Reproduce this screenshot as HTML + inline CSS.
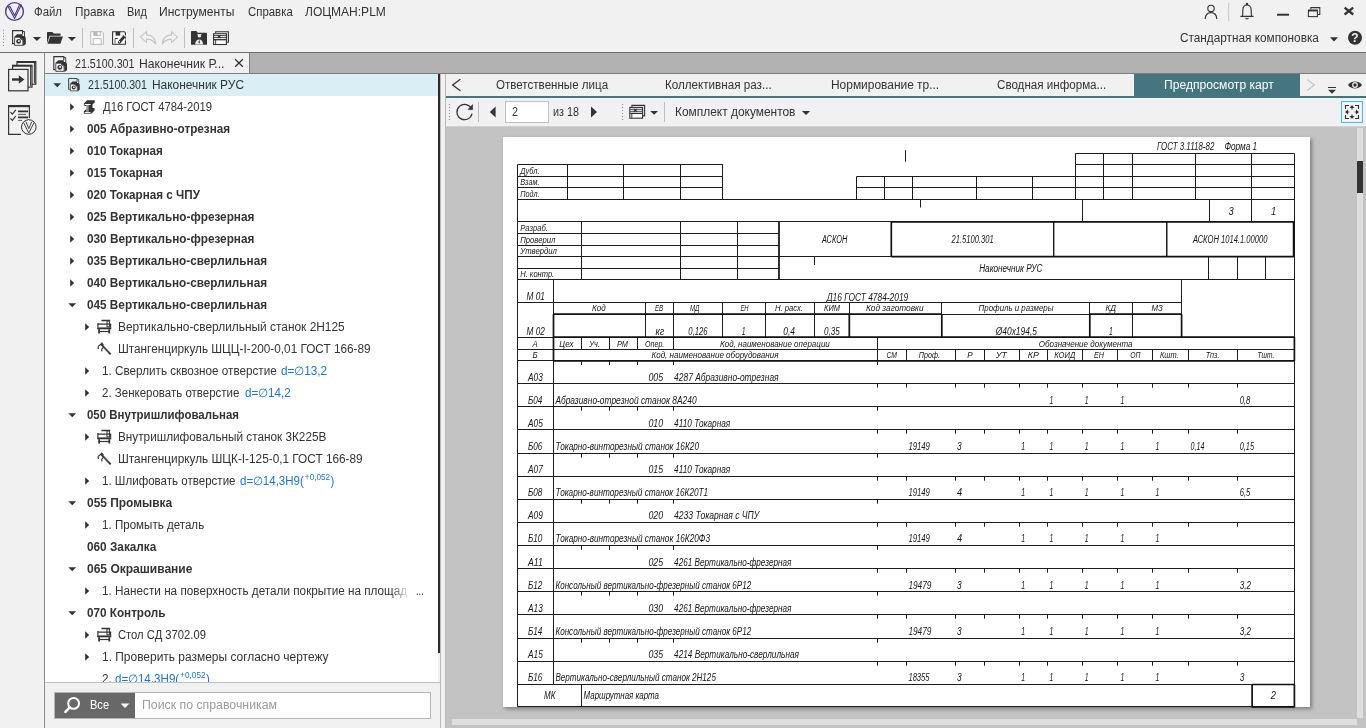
<!DOCTYPE html>
<html lang="ru"><head><meta charset="utf-8"><title>ЛОЦМАН:PLM</title>
<style>
html,body{margin:0;padding:0}
body{width:1366px;height:728px;position:relative;overflow:hidden;background:#f1f1f1;font-family:"Liberation Sans",sans-serif;font-size:12px;color:#333}
.t{position:absolute;white-space:nowrap;line-height:20px;height:20px;transform-origin:0 50%;display:block}
.b{position:absolute}
svg{position:absolute;overflow:visible}
#app{position:absolute;left:0;top:0;width:1366px;height:728px;will-change:transform}
</style></head>
<body>
<div id="app">
<svg style="left:4px;top:1px" width="22" height="22" viewBox="0 0 22 22"><circle cx="10.5" cy="10.5" r="8.9" fill="none" stroke="#523a90" stroke-width="1.4"/><path d="M4.2 5.7 L10.6 17.5 L17.3 3.9 L15.7 3.4 L10.6 14.6 L6 5.4 Z" fill="none" stroke="#523a90" stroke-width="1.1" stroke-linejoin="round"/></svg>
<span class="t" style="left:34.30px;top:1.5px;font-size:12px;transform:scaleX(0.9492);">Файл</span>
<span class="t" style="left:74.70px;top:1.5px;font-size:12px;transform:scaleX(0.9797);">Правка</span>
<span class="t" style="left:127.30px;top:1.5px;font-size:12px;transform:scaleX(0.9103);">Вид</span>
<span class="t" style="left:159.30px;top:1.5px;font-size:12px;transform:scaleX(1.0070);">Инструменты</span>
<span class="t" style="left:247.50px;top:1.5px;font-size:12px;transform:scaleX(0.9507);">Справка</span>
<span class="t" style="left:304.70px;top:1.5px;font-size:12px;transform:scaleX(1.0006);">ЛОЦМАН:PLM</span>
<svg style="left:1200px;top:0" width="166" height="24" viewBox="0 0 166 24"><g fill="none" stroke="#333" stroke-width="1.15"><circle cx="11" cy="8.4" r="3.2"/><path d="M5.2 19 C5.4 14.6 8 12.6 11 12.6 C14 12.6 16.6 14.6 16.8 19"/><path d="M40.4 16.4 H53.6 M42.2 16.4 C43.2 15 42.6 12.6 42.8 10 C43 6.6 44.8 5 47 5 C49.2 5 51 6.6 51.2 10 C51.4 12.6 50.8 15 51.8 16.4"/><path d="M45.6 17.9 A1.5 1.5 0 0 0 48.4 17.9"/><circle cx="47" cy="4" r="0.7" fill="#333"/></g><path d="M28.7 3 V21" stroke="#c8c8c8" stroke-width="1"/><path d="M77 14.7 H89" stroke="#333" stroke-width="2"/><g fill="none" stroke="#333" stroke-width="1.05"><rect x="108.4" y="10.2" width="9" height="6.4"/><path d="M108 10.6 H117.8" stroke-width="1.7"/><path d="M110.8 9.6 V7.6 H119.8 V14.4 H117.6"/></g><path d="M144.6 7.6 L153.2 14.5 M153.2 7.6 L144.6 14.5" stroke="#333" stroke-width="2.3"/></svg>
<span class="t" style="left:1179.50px;top:27.5px;font-size:12px;transform:scaleX(0.9823);">Стандартная компоновка</span>
<svg style="left:1328px;top:28px" width="38" height="20" viewBox="0 0 38 20"><path d="M2 9.2 H10 L6 13.4 Z" fill="#333"/><circle cx="27" cy="9.7" r="7" fill="#333"/><text x="27" y="14" font-size="12" font-weight="bold" fill="#f1f1f1" text-anchor="middle" font-family="Liberation Sans,sans-serif">?</text></svg>
<svg style="left:0;top:26px" width="240" height="24" viewBox="0 26 240 24"><path d="M3.5 29.8 V46" stroke="#8a8a8a" stroke-width="1" stroke-dasharray="1 2"/><g transform="translate(11.8 30)"><path d="M2.2 13.6 H0.8 V0.6 H10.8 V4" fill="none" stroke="#333" stroke-width="1.1"/><path d="M11 1.5 H12.7 V6" fill="none" stroke="#333" stroke-width="0.9"/><path d="M2.4 7 L5.3 4.3 H10.8 V6.1 H13.1 L14 8.2 V13.9 L11.9 15.7 H11.3 V10.3 L7.4 7 Z" fill="#333"/><path d="M2.8 7.3 H7.2 L11.1 10.6 V15.3 H2.8 Z" fill="#fcfcfc" stroke="#333" stroke-width="0.9"/><circle cx="6.8" cy="11.4" r="2.4" fill="#333"/><circle cx="7.1" cy="11" r="1.05" fill="#f4f4f4"/></g><path d="M32.8 37 H41 L36.9 41 Z" fill="#333"/><path d="M47 43.6 V32.4 Q47 31.9 47.6 31.9 H52.3 L53.8 33.6 H60 Q60.6 33.6 60.6 34.2 V35.8 H49.6 L47 43.6 Z" fill="#333"/><path d="M47.6 43.8 L50.2 36.6 H63 L60.4 43.8 Z" fill="#333"/><path d="M67.8 37 H76 L71.9 41 Z" fill="#333"/><path d="M82.5 28 V48 M133.5 28 V48 M184.5 28 V48" stroke="#bdbdbd"/><g fill="#fbfbfb" stroke="#bcbcbc"><path d="M90.7 31.7 H102.4 L103.4 32.7 V44.3 H90.7 Z"/><rect x="93.8" y="31.7" width="6.6" height="3.8" fill="#fbfbfb"/><rect x="94" y="31.9" width="3.6" height="3.4" fill="#b9b9b9" stroke="none"/><rect x="93.2" y="38.6" width="8" height="5.7"/></g><g><path d="M112.6 31.7 H124.4 L125.4 32.7 V44.2 H112.6 Z" fill="#fcfcfc" stroke="#333" stroke-width="1.1"/><rect x="115.6" y="31.7" width="4.6" height="3.9" fill="#333"/><rect x="114.3" y="38.4" width="1.4" height="5.3" fill="#9c9c9c"/><path d="M115 38.5 H117.8" stroke="#333" stroke-width="0.9"/><path d="M124.4 35.2 V40.6" stroke="#fcfcfc" stroke-width="2.4"/><path d="M119.3 42.2 L123.3 37.6" stroke="#333" stroke-width="2.9" stroke-linecap="round"/><path d="M122.8 35.6 L125.6 38.2" stroke="#333" stroke-width="1.3"/><circle cx="119.4" cy="41.8" r="0.7" fill="#fff"/></g><g fill="none" stroke="#c4c4c4" stroke-width="1.1" stroke-linejoin="round"><path d="M146.5 31.6 L140.4 37.2 L146.5 42.4 V39.4 C150.5 39 153.5 40.6 155.6 44 C155.4 38.5 152 35.2 146.5 34.9 Z"/><path d="M171.5 31.6 L177.6 37.2 L171.5 42.4 V39.4 C167.5 39 164.5 40.6 162.4 44 C162.6 38.5 166 35.2 171.5 34.9 Z"/></g><path d="M191 44.8 V31.6 Q191 31 191.6 31 H196.4 L197.8 32.8 H206.4 Q207 32.8 207 33.4 V44.8 Z" fill="#333"/><circle cx="199.4" cy="35.9" r="1.7" fill="#ececec"/><path d="M197.4 34.6 H201.4" stroke="#ececec" stroke-width="1"/><path d="M195.2 44.4 C195.2 41.2 197 39.4 199.2 39.4 C201.4 39.4 203 41.2 203 44.4 Z" fill="#ececec"/><path d="M199.2 39.6 L198.4 42.4 L199.2 43.6 L200 42.4 Z" fill="#333"/><g transform="translate(213 31)"><path d="M2.7 2.2 V0.7 H15.4 V11.2 H13.9" fill="none" stroke="#333" stroke-width="1.1"/><rect x="0.6" y="2.7" width="12.8" height="10.8" fill="#fcfcfc" stroke="#333" stroke-width="1.1"/><path d="M1 4.6 H13 M1 6.6 H13" stroke="#333" stroke-width="0.9"/><path d="M1 8.7 H13" stroke="#333" stroke-width="1.3"/><path d="M4.6 4.2 L7.6 7 M7.6 4.2 L4.6 7" stroke="#333" stroke-width="1.2"/><path d="M2.6 9 V13.2" stroke="#333" stroke-width="0.9"/></g></svg>
<div class="b" style="left:0px;top:52px;width:1366px;height:1px;background:#6e6e6e;"></div>
<div class="b" style="left:45px;top:53px;width:1321px;height:20px;background:#b2b2b2;"></div>
<div class="b" style="left:45px;top:73px;width:1321px;height:1px;background:#7c7c7c;"></div>
<div class="b" style="left:44px;top:53px;width:1px;height:675px;background:#8c8c8c;"></div>
<svg style="left:0;top:56px" width="44" height="90" viewBox="0 56 44 90"><g fill="#f1f1f1" stroke="#333" stroke-width="1.2"><rect x="17" y="61.6" width="18.8" height="22.6"/><rect x="12.6" y="65.3" width="19.4" height="21.8"/><rect x="8.6" y="69.4" width="19.4" height="21.4"/></g><path d="M34.4 63 V83 M30.6 66.6 V86" stroke="#333" stroke-width="1"/><path d="M12 79.5 H20" stroke="#333" stroke-width="2.4"/><path d="M18.8 75.2 L24.4 79.5 L18.8 83.8 Z" fill="#333"/><path d="M17 62.2 H35.8 M12.6 65.9 H32" stroke="#333" stroke-width="1.8"/><g fill="none" stroke="#333" stroke-width="1.2"><path d="M21 134.3 H8.6 V105.6 H29.4 V118"/><path d="M8 106.2 H30" stroke-width="2"/><path d="M10.4 112.2 L12.4 114.2 L15.8 109.8 M10.4 118.4 L12.4 120.4 L15.8 116"/><path d="M18 111.4 H28 M18 117.4 H28" stroke-width="1.6"/><path d="M18 114.4 H26 M18 120.4 H22" stroke-width="0.8"/><circle cx="28.8" cy="127" r="7.3" fill="#f1f1f1" stroke-width="1"/><path d="M23.6 122.6 L28.8 133.2 L34 122.6 M25.8 121.6 L28.8 128.6 L31.8 121.6" stroke-width="0.9"/></g></svg>
<div class="b" style="left:45px;top:53px;width:204px;height:20px;background:#f1f1f1;"></div>
<div class="b" style="left:249px;top:53px;width:1px;height:20px;background:#7a7a7a;"></div>
<svg style="left:53px;top:55.5px" width="14.5" height="16.0" viewBox="0 0 14.5 16"><path d="M2.2 13.6 H0.8 V0.6 H10.8 V4" fill="none" stroke="#333" stroke-width="1.1"/><path d="M11 1.5 H12.7 V6" fill="none" stroke="#333" stroke-width="0.9"/><path d="M2.4 7 L5.3 4.3 H10.8 V6.1 H13.1 L14 8.2 V13.9 L11.9 15.7 H11.3 V10.3 L7.4 7 Z" fill="#333"/><path d="M2.8 7.3 H7.2 L11.1 10.6 V15.3 H2.8 Z" fill="#fcfcfc" stroke="#333" stroke-width="0.9"/><circle cx="6.8" cy="11.4" r="2.4" fill="#333"/><circle cx="7.1" cy="11" r="1.05" fill="#f4f4f4"/></svg>
<span class="t" style="left:75.20px;top:53.5px;font-size:12px;transform:scaleX(0.8914);">21.5100.301</span>
<span class="t" style="left:138.80px;top:53.5px;font-size:12px;transform:scaleX(1.0148);">Наконечник Р...</span>
<svg style="left:232px;top:56px" width="14" height="14" viewBox="0 0 14 14"><path d="M3.2 3.2 L10.8 10.8 M10.8 3.2 L3.2 10.8" stroke="#333" stroke-width="1.3"/></svg>
<div class="b" style="left:45px;top:74px;width:393px;height:608px;background:#fff;overflow:hidden">
<div class="b" style="left:0;top:0;width:393px;height:22px;background:#d9eff5"></div>
</div>
<div id="tree" class="b" style="left:0;top:74px;width:438px;height:608px;overflow:hidden"><div class="b" style="left:0;top:-74px;width:438px;height:700px">
<svg style="left:53px;top:83.2px" width="9" height="5" viewBox="0 0 9 5"><path d="M0.3 0.3 H8.1 L4.2 4.3 Z" fill="#333"/></svg>
<svg style="left:68px;top:78px" width="12.18" height="13.44" viewBox="0 0 14.5 16"><path d="M2.2 13.6 H0.8 V0.6 H10.8 V4" fill="none" stroke="#333" stroke-width="1.1"/><path d="M11 1.5 H12.7 V6" fill="none" stroke="#333" stroke-width="0.9"/><path d="M2.4 7 L5.3 4.3 H10.8 V6.1 H13.1 L14 8.2 V13.9 L11.9 15.7 H11.3 V10.3 L7.4 7 Z" fill="#333"/><path d="M2.8 7.3 H7.2 L11.1 10.6 V15.3 H2.8 Z" fill="#fcfcfc" stroke="#333" stroke-width="0.9"/><circle cx="6.8" cy="11.4" r="2.4" fill="#333"/><circle cx="7.1" cy="11" r="1.05" fill="#f4f4f4"/></svg>
<span class="t" style="left:88.40px;top:74.5px;font-size:12px;transform:scaleX(0.8824);">21.5100.301</span>
<span class="t" style="left:151.50px;top:74.5px;font-size:12px;transform:scaleX(0.9946);">Наконечник РУС</span>
<svg style="left:70px;top:103.2px" width="5" height="8" viewBox="0 0 5 8"><path d="M0.2 0.3 L4.2 4 L0.2 7.7 Z" fill="#333"/></svg>
<svg style="left:83.3px;top:100px" width="13" height="15" viewBox="0 0 13 15"><path d="M4 0.2 H11.7 V2.4 L9.5 4.4 V7.7 L11.6 8.3 V10.5 L8.3 13.8 H0.9 V11.3 L3.5 8.8 V6 L0.9 5.8 V3.5 Z" fill="#333"/><rect x="1.7" y="4" width="5.9" height="1" fill="#fff"/><rect x="1.7" y="12.1" width="5.9" height="1" fill="#fff"/><rect x="3.5" y="5" width="1" height="6.9" fill="#e2e2e2"/><rect x="4.5" y="5" width="1.2" height="6.9" fill="#9a9a9a"/></svg>
<span class="t" style="left:103.00px;top:96.5px;font-size:12px;transform:scaleX(0.9385);">Д16 ГОСТ 4784-2019</span>
<svg style="left:70px;top:125.2px" width="5" height="8" viewBox="0 0 5 8"><path d="M0.2 0.3 L4.2 4 L0.2 7.7 Z" fill="#333"/></svg>
<span class="t" style="left:87.40px;top:118.5px;font-size:12px;transform:scaleX(0.9768);font-weight:bold;">005 Абразивно-отрезная</span>
<svg style="left:70px;top:147.2px" width="5" height="8" viewBox="0 0 5 8"><path d="M0.2 0.3 L4.2 4 L0.2 7.7 Z" fill="#333"/></svg>
<span class="t" style="left:87.40px;top:140.5px;font-size:12px;transform:scaleX(0.9687);font-weight:bold;">010 Токарная</span>
<svg style="left:70px;top:169.2px" width="5" height="8" viewBox="0 0 5 8"><path d="M0.2 0.3 L4.2 4 L0.2 7.7 Z" fill="#333"/></svg>
<span class="t" style="left:87.40px;top:162.5px;font-size:12px;transform:scaleX(0.9687);font-weight:bold;">015 Токарная</span>
<svg style="left:70px;top:191.2px" width="5" height="8" viewBox="0 0 5 8"><path d="M0.2 0.3 L4.2 4 L0.2 7.7 Z" fill="#333"/></svg>
<span class="t" style="left:87.40px;top:184.5px;font-size:12px;transform:scaleX(0.9729);font-weight:bold;">020 Токарная с ЧПУ</span>
<svg style="left:70px;top:213.2px" width="5" height="8" viewBox="0 0 5 8"><path d="M0.2 0.3 L4.2 4 L0.2 7.7 Z" fill="#333"/></svg>
<span class="t" style="left:87.40px;top:206.5px;font-size:12px;transform:scaleX(0.9811);font-weight:bold;">025 Вертикально-фрезерная</span>
<svg style="left:70px;top:235.2px" width="5" height="8" viewBox="0 0 5 8"><path d="M0.2 0.3 L4.2 4 L0.2 7.7 Z" fill="#333"/></svg>
<span class="t" style="left:87.40px;top:228.5px;font-size:12px;transform:scaleX(0.9811);font-weight:bold;">030 Вертикально-фрезерная</span>
<svg style="left:70px;top:257.2px" width="5" height="8" viewBox="0 0 5 8"><path d="M0.2 0.3 L4.2 4 L0.2 7.7 Z" fill="#333"/></svg>
<span class="t" style="left:87.40px;top:250.5px;font-size:12px;transform:scaleX(0.9789);font-weight:bold;">035 Вертикально-сверлильная</span>
<svg style="left:70px;top:279.2px" width="5" height="8" viewBox="0 0 5 8"><path d="M0.2 0.3 L4.2 4 L0.2 7.7 Z" fill="#333"/></svg>
<span class="t" style="left:87.40px;top:272.5px;font-size:12px;transform:scaleX(0.9789);font-weight:bold;">040 Вертикально-сверлильная</span>
<svg style="left:68px;top:303.2px" width="9" height="5" viewBox="0 0 9 5"><path d="M0.3 0.3 H8.1 L4.2 4.3 Z" fill="#333"/></svg>
<span class="t" style="left:87.40px;top:294.5px;font-size:12px;transform:scaleX(0.9789);font-weight:bold;">045 Вертикально-сверлильная</span>
<svg style="left:85.2px;top:323.2px" width="5" height="8" viewBox="0 0 5 8"><path d="M0.2 0.3 L4.2 4 L0.2 7.7 Z" fill="#333"/></svg>
<svg style="left:96.8px;top:319.2px" width="15" height="15" viewBox="0 0 15 15"><path d="M4.4 1.5 H13.2" stroke="#333" stroke-width="1.5"/><rect x="10" y="2" width="2.4" height="5.8" fill="#fff" stroke="#333" stroke-width="1"/><path d="M0.9 8.5 V4 M0.9 5.2 H13.6 V8.5" fill="none" stroke="#333" stroke-width="1.2"/><rect x="0.1" y="8.4" width="14.2" height="1.9" fill="#333"/><path d="M2.1 10.3 V14.5 M12.3 10.3 V14.5" stroke="#333" stroke-width="1.8" fill="none"/><path d="M2.1 12.5 H12.3" stroke="#333" stroke-width="1.2"/></svg>
<span class="t" style="left:118.10px;top:316.5px;font-size:12px;transform:scaleX(0.9910);">Вертикально-сверлильный станок 2Н125</span>
<svg style="left:96.6px;top:342.4px" width="15" height="14" viewBox="0 0 15 14"><path d="M3.6 1.6 L13.6 12.4" stroke="#333" stroke-width="1.9"/><path d="M4.4 0.6 L6.4 2.8 M1 4.6 L3.8 2.2 M1.4 7 L1 4.6 M4.6 7.4 L6.4 5.4 M5 9.4 L4.6 7.4" stroke="#333" stroke-width="1.2" fill="none"/><path d="M6.6 5 L11.8 10.6" stroke="#f4f4f4" stroke-width="0.5" stroke-dasharray="0.8 0.8"/></svg>
<span class="t" style="left:118.10px;top:338.5px;font-size:12px;transform:scaleX(0.9819);">Штангенциркуль ШЦЦ-I-200-0,01 ГОСТ 166-89</span>
<svg style="left:85.2px;top:367.2px" width="5" height="8" viewBox="0 0 5 8"><path d="M0.2 0.3 L4.2 4 L0.2 7.7 Z" fill="#333"/></svg>
<span class="t" style="left:102.20px;top:360.5px;font-size:12px;transform:scaleX(0.9753);">1. Сверлить сквозное отверстие</span>
<span class="t" style="left:280.70px;top:360.5px;font-size:12px;transform:scaleX(0.9804);color:#1a73d8;">d=∅13,2</span>
<svg style="left:85.2px;top:389.2px" width="5" height="8" viewBox="0 0 5 8"><path d="M0.2 0.3 L4.2 4 L0.2 7.7 Z" fill="#333"/></svg>
<span class="t" style="left:102.20px;top:382.5px;font-size:12px;transform:scaleX(0.9583);">2. Зенкеровать отверстие</span>
<span class="t" style="left:244.70px;top:382.5px;font-size:12px;transform:scaleX(0.9739);color:#1a73d8;">d=∅14,2</span>
<svg style="left:68px;top:413.2px" width="9" height="5" viewBox="0 0 9 5"><path d="M0.3 0.3 H8.1 L4.2 4.3 Z" fill="#333"/></svg>
<span class="t" style="left:87.40px;top:404.5px;font-size:12px;transform:scaleX(0.9546);font-weight:bold;">050 Внутришлифовальная</span>
<svg style="left:85.2px;top:433.2px" width="5" height="8" viewBox="0 0 5 8"><path d="M0.2 0.3 L4.2 4 L0.2 7.7 Z" fill="#333"/></svg>
<svg style="left:96.8px;top:429.2px" width="15" height="15" viewBox="0 0 15 15"><path d="M4.4 1.5 H13.2" stroke="#333" stroke-width="1.5"/><rect x="10" y="2" width="2.4" height="5.8" fill="#fff" stroke="#333" stroke-width="1"/><path d="M0.9 8.5 V4 M0.9 5.2 H13.6 V8.5" fill="none" stroke="#333" stroke-width="1.2"/><rect x="0.1" y="8.4" width="14.2" height="1.9" fill="#333"/><path d="M2.1 10.3 V14.5 M12.3 10.3 V14.5" stroke="#333" stroke-width="1.8" fill="none"/><path d="M2.1 12.5 H12.3" stroke="#333" stroke-width="1.2"/></svg>
<span class="t" style="left:118.10px;top:426.5px;font-size:12px;transform:scaleX(0.9807);">Внутришлифовальный станок 3К225В</span>
<svg style="left:96.6px;top:452.4px" width="15" height="14" viewBox="0 0 15 14"><path d="M3.6 1.6 L13.6 12.4" stroke="#333" stroke-width="1.9"/><path d="M4.4 0.6 L6.4 2.8 M1 4.6 L3.8 2.2 M1.4 7 L1 4.6 M4.6 7.4 L6.4 5.4 M5 9.4 L4.6 7.4" stroke="#333" stroke-width="1.2" fill="none"/><path d="M6.6 5 L11.8 10.6" stroke="#f4f4f4" stroke-width="0.5" stroke-dasharray="0.8 0.8"/></svg>
<span class="t" style="left:118.10px;top:448.5px;font-size:12px;transform:scaleX(0.9837);">Штангенциркуль ШЦК-I-125-0,1 ГОСТ 166-89</span>
<svg style="left:85.2px;top:477.2px" width="5" height="8" viewBox="0 0 5 8"><path d="M0.2 0.3 L4.2 4 L0.2 7.7 Z" fill="#333"/></svg>
<span class="t" style="left:102.20px;top:470.5px;font-size:12px;transform:scaleX(0.9629);">1. Шлифовать отверстие</span>
<span class="t" style="left:239.6px;top:470.5px;color:#1a73d8;transform:scaleX(0.9625)">d=∅14,3H9(<span style="font-size:8.5px;position:relative;top:-4.5px;margin:0 0.5px 0 1px">+0,052</span>)</span>
<svg style="left:68px;top:501.2px" width="9" height="5" viewBox="0 0 9 5"><path d="M0.3 0.3 H8.1 L4.2 4.3 Z" fill="#333"/></svg>
<span class="t" style="left:87.40px;top:492.5px;font-size:12px;transform:scaleX(0.9948);font-weight:bold;">055 Промывка</span>
<svg style="left:85.2px;top:521.2px" width="5" height="8" viewBox="0 0 5 8"><path d="M0.2 0.3 L4.2 4 L0.2 7.7 Z" fill="#333"/></svg>
<span class="t" style="left:102.20px;top:514.5px;font-size:12px;transform:scaleX(0.9653);">1. Промыть деталь</span>
<span class="t" style="left:87.40px;top:536.5px;font-size:12px;transform:scaleX(0.9827);font-weight:bold;">060 Закалка</span>
<svg style="left:68px;top:567.2px" width="9" height="5" viewBox="0 0 9 5"><path d="M0.3 0.3 H8.1 L4.2 4.3 Z" fill="#333"/></svg>
<span class="t" style="left:87.40px;top:558.5px;font-size:12px;transform:scaleX(1.0014);font-weight:bold;">065 Окрашивание</span>
<svg style="left:85.2px;top:587.2px" width="5" height="8" viewBox="0 0 5 8"><path d="M0.2 0.3 L4.2 4 L0.2 7.7 Z" fill="#333"/></svg>
<span class="t" style="left:102.20px;top:580.5px;font-size:12px;transform:scaleX(0.9783);">1. Нанести на поверхность детали покрытие на площад</span>
<svg style="left:68px;top:611.2px" width="9" height="5" viewBox="0 0 9 5"><path d="M0.3 0.3 H8.1 L4.2 4.3 Z" fill="#333"/></svg>
<span class="t" style="left:87.40px;top:602.5px;font-size:12px;transform:scaleX(0.9752);font-weight:bold;">070 Контроль</span>
<svg style="left:85.2px;top:631.2px" width="5" height="8" viewBox="0 0 5 8"><path d="M0.2 0.3 L4.2 4 L0.2 7.7 Z" fill="#333"/></svg>
<svg style="left:96.8px;top:627.2px" width="15" height="15" viewBox="0 0 15 15"><path d="M4.4 1.5 H13.2" stroke="#333" stroke-width="1.5"/><rect x="10" y="2" width="2.4" height="5.8" fill="#fff" stroke="#333" stroke-width="1"/><path d="M0.9 8.5 V4 M0.9 5.2 H13.6 V8.5" fill="none" stroke="#333" stroke-width="1.2"/><rect x="0.1" y="8.4" width="14.2" height="1.9" fill="#333"/><path d="M2.1 10.3 V14.5 M12.3 10.3 V14.5" stroke="#333" stroke-width="1.8" fill="none"/><path d="M2.1 12.5 H12.3" stroke="#333" stroke-width="1.2"/></svg>
<span class="t" style="left:118.10px;top:624.5px;font-size:12px;transform:scaleX(0.9351);">Стол СД 3702.09</span>
<svg style="left:85.2px;top:653.2px" width="5" height="8" viewBox="0 0 5 8"><path d="M0.2 0.3 L4.2 4 L0.2 7.7 Z" fill="#333"/></svg>
<span class="t" style="left:102.20px;top:646.5px;font-size:12px;transform:scaleX(0.9955);">1. Проверить размеры согласно чертежу</span>
<span class="t" style="left:102.20px;top:668.5px;font-size:12px;transform:scaleX(0.9800);">2.</span>
<span class="t" style="left:114.5px;top:668.5px;color:#1a73d8;transform:scaleX(0.9677)">d=∅14,3H9(<span style="font-size:8.5px;position:relative;top:-4.5px;margin:0 0.5px 0 1px">+0,052</span>)</span>
<div class="b" style="left:392px;top:581px;width:18px;height:20px;background:linear-gradient(90deg,rgba(255,255,255,0),#fff)"></div>
<span class="t" style="left:415.80px;top:580.5px;font-size:12px;transform:scaleX(0.7800);">...</span>
</div></div>
<div class="b" style="left:438px;top:74px;width:2px;height:608px;background:#f1f1f1;"></div>
<div class="b" style="left:438px;top:74px;width:2px;height:579px;background:#2b2b2b;"></div>
<div class="b" style="left:440px;top:74px;width:1px;height:654px;background:#b9b9b9;"></div>
<div class="b" style="left:445px;top:74px;width:1px;height:654px;background:#b9b9b9;"></div>
<div class="b" style="left:45px;top:682px;width:395px;height:1px;background:#c0c0c0;"></div>
<div class="b" style="left:54px;top:692px;width:377px;height:27px;background:#fff;border:1px solid #b4b4b4;box-sizing:border-box;"></div>
<div class="b" style="left:55px;top:693px;width:79.5px;height:25px;background:#686868;"></div>
<svg style="left:62px;top:696px" width="20" height="18" viewBox="0 0 20 18"><circle cx="11.6" cy="7.4" r="5.4" fill="none" stroke="#fff" stroke-width="2"/><path d="M7.8 11.4 L3.4 15.8" stroke="#fff" stroke-width="2.6" stroke-linecap="round"/></svg>
<span class="t" style="left:90.00px;top:695.0px;font-size:12px;transform:scaleX(0.9212);color:#fff;">Все</span>
<svg style="left:120px;top:703px" width="10" height="6" viewBox="0 0 10 6"><path d="M0.6 0.6 H9.4 L5 5 Z" fill="#fff"/></svg>
<span class="t" style="left:142.40px;top:695.0px;font-size:12px;transform:scaleX(1.0256);color:#9b9b9b;">Поиск по справочникам</span>
<div class="b" style="left:446px;top:74px;width:920px;height:22px;background:#f1f1f1;"></div>
<div class="b" style="left:446px;top:96px;width:920px;height:2px;background:#45757f;"></div>
<div class="b" style="left:1134px;top:74px;width:166px;height:23px;background:#45757f;"></div>
<svg style="left:450px;top:78px" width="14" height="14" viewBox="0 0 14 14"><path d="M10 1.5 L2.6 7 L10 12.5" fill="none" stroke="#333" stroke-width="1.3" stroke-linecap="round" stroke-linejoin="round"/></svg>
<span class="t" style="left:496.20px;top:74.5px;font-size:12px;transform:scaleX(0.9641);">Ответственные лица</span>
<span class="t" style="left:665.00px;top:74.5px;font-size:12px;transform:scaleX(0.9702);">Коллективная раз...</span>
<span class="t" style="left:831.00px;top:74.5px;font-size:12px;transform:scaleX(0.9949);">Нормирование тр...</span>
<span class="t" style="left:997.20px;top:74.5px;font-size:12px;transform:scaleX(0.9674);">Сводная информа...</span>
<span class="t" style="left:1164.40px;top:74.5px;font-size:12px;transform:scaleX(1.0094);color:#fff;">Предпросмотр карт</span>
<svg style="left:1304px;top:78px" width="62" height="18" viewBox="1304 78 62 18"><path d="M1307.2 79.4 L1314.4 85 L1307.2 90.6" fill="none" stroke="#c6c6c6" stroke-width="1.3"/><path d="M1328 87.5 H1336" stroke="#333" stroke-width="1"/><path d="M1328 89.8 H1336 L1332 93.8 Z" fill="#333"/><path d="M1348 85 C1351 80.4 1359 80.4 1362 85 C1359 89.6 1351 89.6 1348 85 Z" fill="#333"/><circle cx="1355" cy="85" r="2.9" fill="#f1f1f1"/><circle cx="1355" cy="85" r="1.7" fill="#333"/></svg>
<div class="b" style="left:446px;top:98px;width:920px;height:28px;background:#f1f1f1;"></div>
<div class="b" style="left:446px;top:126px;width:920px;height:1px;background:#d2d2d2;"></div>
<svg style="left:446px;top:98px" width="370" height="28" viewBox="446 98 370 28"><path d="M449.5 104 V121 M622.5 104 V121" stroke="#8a8a8a" stroke-dasharray="1 2"/><path d="M478.5 102 V122 M664.5 102 V122" stroke="#bdbdbd"/><path d="M471.6 109.2 A7.6 7.6 0 1 0 472 113.6" fill="none" stroke="#333" stroke-width="1.2"/><path d="M468.2 109.6 L472.6 104.6 V109.6 Z" fill="#333" stroke="#333" stroke-width="0.6"/><path d="M495.6 106.4 V117.6 L489.8 112 Z M591 106.4 V117.6 L597 112 Z" fill="#333"/><g transform="translate(629.2 104.7)"><path d="M2.7 2.2 V0.7 H15.4 V11.2 H13.9" fill="none" stroke="#333" stroke-width="1.1"/><rect x="0.6" y="2.7" width="12.8" height="10.8" fill="#fcfcfc" stroke="#333" stroke-width="1.1"/><path d="M1 4.6 H13 M1 6.6 H13" stroke="#333" stroke-width="0.9"/><path d="M1 8.7 H13" stroke="#333" stroke-width="1.3"/><path d="M4.6 4.2 L7.6 7 M7.6 4.2 L4.6 7" stroke="#333" stroke-width="1.2"/><path d="M2.6 9 V13.2" stroke="#333" stroke-width="0.9"/></g><path d="M650.2 110.9 H658 L654.1 114.8 Z M801.9 110.9 H810.1 L806 115 Z" fill="#333"/></svg>
<div class="b" style="left:504.7px;top:101px;width:44px;height:21.7px;background:#fff;border:1px solid #c2c2c2;box-sizing:border-box;"></div>
<span class="t" style="left:512.40px;top:101.5px;font-size:12px;transform:scaleX(0.9057);">2</span>
<span class="t" style="left:552.80px;top:101.5px;font-size:12px;transform:scaleX(0.8970);">из 18</span>
<span class="t" style="left:674.70px;top:101.5px;font-size:12px;transform:scaleX(0.9938);">Комплект документов</span>
<div class="b" style="left:1341px;top:101px;width:22px;height:22px;background:#f1f1f1;border:1px solid #3cc3dc;box-sizing:border-box;"></div>
<svg style="left:1341px;top:101px" width="22" height="22" viewBox="0 0 22 22"><g fill="none" stroke="#333" stroke-width="1.1"><path d="M4.5 8 V4.5 H8 M14 4.5 H17.5 V8 M17.5 14 V17.5 H14 M8 17.5 H4.5 V14"/><path d="M11 5 V8.4 M11 13.6 V17 M5 11 H8.4 M13.6 11 H17"/></g><path d="M8.6 7 L11 4 L13.4 7 Z M8.6 15 L11 18 L13.4 15 Z M7 8.6 L4 11 L7 13.4 Z M15 8.6 L18 11 L15 13.4 Z" fill="#333"/></svg>
<div class="b" style="left:446px;top:127px;width:920px;height:601px;background:#c3c3c3;"></div>
<div class="b" style="left:1357px;top:128px;width:6px;height:590px;background:#dedede;"></div>
<div class="b" style="left:1357px;top:161px;width:6px;height:32px;background:#333;"></div>
<div class="b" style="left:452px;top:719px;width:905px;height:6px;background:#dedede;"></div>
<div class="b" style="left:503px;top:137px;width:806.7px;height:570.2px;background:#fff;box-shadow:2px 2px 4px rgba(0,0,0,0.36);"></div>
<svg style="left:503px;top:137px" width="807" height="571" viewBox="503 137 807 571" font-family="Liberation Sans,sans-serif" font-style="italic" fill="#161616"><path d="M517.5 164.5V706.8M1294.5 153.5V706.8M517.5 164.5H722.7M517.5 176.5H722.7M517.5 187.5H722.7M517.5 199.5H1294.4M567.5 164.5V199.4M623.5 164.5V199.4M680.5 164.5V199.4M722.5 164.5V199.4M856.5 176.5H1294.4M856.5 187.5H1294.4M856.5 176.5V199.4M884.5 176.5V199.4M912.5 176.5V199.4M976.5 176.5V199.4M1032.5 176.5V199.4M1075.4 153.5H1294.4M1075.4 164.5H1294.4M1075.5 153.5V199.4M1103.5 153.5V199.4M1132.5 153.5V199.4M1195.5 153.5V199.4M1251.5 153.5V221.7M905.5 150.2V161.7M920.5 199.4V207.5M1082.5 199.4V221.7M1209.5 199.4V221.7M517.5 221.5H1294.4M517.5 233.5H779.0M517.5 245.5H779.0M517.5 268.5H779.0M517.5 256.5H1294.4M517.5 279.5H1294.4M581.5 221.9V279.5M680.5 221.9V279.5M737.5 221.9V279.5M1053.5 222.0V256.6M1166.5 222.0V256.6M1053.9 222V256.6M1167 222V256.6M814.5 256.5V265.0M1208.5 256.5V279.5M1237.5 256.5V279.5M1265.5 256.5V279.5M517.5 302.5H1181.6M553.5 314.5H1181.6M517.5 337.5H1294.4M553.5 279.5V684.5M645.5 302.7V337.1M673.5 302.7V337.1M722.5 302.7V337.1M765.5 302.7V337.1M814.5 302.7V337.1M849.5 302.7V337.1M941.5 302.7V337.1M1089.5 302.7V337.1M1132.5 302.7V337.1M1181.5 279.5V337.1M517.5 349.5H1294.4M517.5 360.5H1294.4M581.5 337.1V349.6M609.5 337.1V349.6M637.5 337.1V349.6M673.5 337.1V349.6M877.5 337.1V360.8M906.5 349.6V360.8M955.5 349.6V360.8M984.5 349.6V360.8M1019.5 349.6V360.8M1047.5 349.6V360.8M1082.5 349.6V360.8M1117.5 349.6V360.8M1152.5 349.6V360.8M1188.5 349.6V360.8M1237.5 349.6V360.8M517.5 383.5H1294.4M517.5 406.5H1294.4M517.5 429.5H1294.4M517.5 453.5H1294.4M517.5 476.5H1294.4M517.5 499.5H1294.4M517.5 522.5H1294.4M517.5 545.5H1294.4M517.5 568.5H1294.4M517.5 591.5H1294.4M517.5 614.5H1294.4M517.5 638.5H1294.4M517.5 661.5H1294.4M517.5 684.5H1294.4M517.5 706.5H1294.4M581.5 360.9V365.1M609.5 360.9V365.1M637.5 360.9V365.1M673.5 360.9V365.1M877.5 360.9V365.1M877.5 383.5V387.7M906.5 383.5V387.7M955.5 383.5V387.7M984.5 383.5V387.7M1019.5 383.5V387.7M1047.5 383.5V387.7M1082.5 383.5V387.7M1117.5 383.5V387.7M1152.5 383.5V387.7M1188.5 383.5V387.7M1237.5 383.5V387.7M581.5 406.5V410.7M609.5 406.5V410.7M637.5 406.5V410.7M673.5 406.5V410.7M877.5 406.5V410.7M877.5 429.5V433.7M906.5 429.5V433.7M955.5 429.5V433.7M984.5 429.5V433.7M1019.5 429.5V433.7M1047.5 429.5V433.7M1082.5 429.5V433.7M1117.5 429.5V433.7M1152.5 429.5V433.7M1188.5 429.5V433.7M1237.5 429.5V433.7M581.5 453.5V457.7M609.5 453.5V457.7M637.5 453.5V457.7M673.5 453.5V457.7M877.5 453.5V457.7M877.5 476.5V480.7M906.5 476.5V480.7M955.5 476.5V480.7M984.5 476.5V480.7M1019.5 476.5V480.7M1047.5 476.5V480.7M1082.5 476.5V480.7M1117.5 476.5V480.7M1152.5 476.5V480.7M1188.5 476.5V480.7M1237.5 476.5V480.7M581.5 499.5V503.7M609.5 499.5V503.7M637.5 499.5V503.7M673.5 499.5V503.7M877.5 499.5V503.7M877.5 522.5V526.7M906.5 522.5V526.7M955.5 522.5V526.7M984.5 522.5V526.7M1019.5 522.5V526.7M1047.5 522.5V526.7M1082.5 522.5V526.7M1117.5 522.5V526.7M1152.5 522.5V526.7M1188.5 522.5V526.7M1237.5 522.5V526.7M581.5 545.5V549.7M609.5 545.5V549.7M637.5 545.5V549.7M673.5 545.5V549.7M877.5 545.5V549.7M877.5 568.5V572.7M906.5 568.5V572.7M955.5 568.5V572.7M984.5 568.5V572.7M1019.5 568.5V572.7M1047.5 568.5V572.7M1082.5 568.5V572.7M1117.5 568.5V572.7M1152.5 568.5V572.7M1188.5 568.5V572.7M1237.5 568.5V572.7M581.5 591.5V595.7M609.5 591.5V595.7M637.5 591.5V595.7M673.5 591.5V595.7M877.5 591.5V595.7M877.5 614.5V618.7M906.5 614.5V618.7M955.5 614.5V618.7M984.5 614.5V618.7M1019.5 614.5V618.7M1047.5 614.5V618.7M1082.5 614.5V618.7M1117.5 614.5V618.7M1152.5 614.5V618.7M1188.5 614.5V618.7M1237.5 614.5V618.7M581.5 638.5V642.7M609.5 638.5V642.7M637.5 638.5V642.7M673.5 638.5V642.7M877.5 638.5V642.7M877.5 661.5V665.7M906.5 661.5V665.7M955.5 661.5V665.7M984.5 661.5V665.7M1019.5 661.5V665.7M1047.5 661.5V665.7M1082.5 661.5V665.7M1117.5 661.5V665.7M1152.5 661.5V665.7M1188.5 661.5V665.7M1237.5 661.5V665.7M581.5 684.5V706.8" stroke="#1c1c1c" stroke-width="1" fill="none"/>
<path d="M779.0 221.9V279.5M891.3 222.0H1293.8M891.3 256.6H1293.8M891.3 222.0V256.6M1293.6 222.0V256.6M553.5 314.2H941.8M1089.8 314.2H1181.6M553.5 337.1H1294.8M553.5 314.2V360.8M849.3 314.2V337.1M941.8 314.2V337.1M1089.8 314.2V337.1M1181.6 314.2V337.1M553.5 360.8H1294.8M1294.4 337.1V360.8M1252.1 684.5H1294.8M1252.1 706.9H1294.8M1252.1 684.5V707.6M1294.4 684.5V707.6" stroke="#111" stroke-width="1.7" fill="none"/>
<text x="1157.0" y="150.2" font-size="10.17" textLength="57.3" lengthAdjust="spacingAndGlyphs">ГОСТ 3.1118-82</text>
<text x="1224.4" y="150.2" font-size="10.17" textLength="32.8" lengthAdjust="spacingAndGlyphs">Форма 1</text>
<text x="520.2" y="174.0" font-size="9.59" textLength="19.3" lengthAdjust="spacingAndGlyphs">Дубл.</text>
<text x="520.2" y="184.9" font-size="9.59" textLength="19.3" lengthAdjust="spacingAndGlyphs">Взам.</text>
<text x="520.2" y="196.8" font-size="9.59" textLength="19.3" lengthAdjust="spacingAndGlyphs">Подл.</text>
<text x="1228.4" y="215.2" font-size="11.63" textLength="5.2" lengthAdjust="spacingAndGlyphs">3</text>
<text x="1271.0" y="215.2" font-size="11.63" textLength="5.2" lengthAdjust="spacingAndGlyphs">1</text>
<text x="520.2" y="231.3" font-size="9.30" textLength="27.7" lengthAdjust="spacingAndGlyphs">Разраб.</text>
<text x="520.2" y="243.2" font-size="9.30" textLength="35.2" lengthAdjust="spacingAndGlyphs">Проверил</text>
<text x="520.2" y="254.4" font-size="9.30" textLength="36.8" lengthAdjust="spacingAndGlyphs">Утвердил</text>
<text x="520.2" y="277.2" font-size="9.30" textLength="34.0" lengthAdjust="spacingAndGlyphs">Н. контр.</text>
<text x="822.0" y="243.3" font-size="11.63" textLength="25.3" lengthAdjust="spacingAndGlyphs">АСКОН</text>
<text x="951.5" y="243.3" font-size="11.63" textLength="42.2" lengthAdjust="spacingAndGlyphs">21.5100.301</text>
<text x="1193.0" y="243.2" font-size="11.63" textLength="74.4" lengthAdjust="spacingAndGlyphs">АСКОН 1014.1.00000</text>
<text x="979.2" y="272.0" font-size="11.05" textLength="63.2" lengthAdjust="spacingAndGlyphs">Наконечник РУС</text>
<text x="526.5" y="300.3" font-size="11.05" textLength="18.3" lengthAdjust="spacingAndGlyphs">М 01</text>
<text x="826.7" y="300.6" font-size="11.63" textLength="81.5" lengthAdjust="spacingAndGlyphs">Д16 ГОСТ 4784-2019</text>
<text x="592.1" y="311.3" font-size="8.72" textLength="13.6" lengthAdjust="spacingAndGlyphs">Код</text>
<text x="654.9" y="311.3" font-size="8.72" textLength="8.2" lengthAdjust="spacingAndGlyphs">ЕВ</text>
<text x="690.0" y="311.3" font-size="8.72" textLength="9.4" lengthAdjust="spacingAndGlyphs">МД</text>
<text x="740.4" y="311.3" font-size="8.72" textLength="8.2" lengthAdjust="spacingAndGlyphs">ЕН</text>
<text x="775.0" y="311.3" font-size="8.72" textLength="28.0" lengthAdjust="spacingAndGlyphs">Н. расх.</text>
<text x="824.0" y="311.3" font-size="8.72" textLength="15.9" lengthAdjust="spacingAndGlyphs">КИМ</text>
<text x="866.0" y="311.3" font-size="8.72" textLength="57.5" lengthAdjust="spacingAndGlyphs">Код заготовки</text>
<text x="978.6" y="311.3" font-size="8.72" textLength="74.9" lengthAdjust="spacingAndGlyphs">Профиль и размеры</text>
<text x="1105.4" y="311.3" font-size="8.72" textLength="10.6" lengthAdjust="spacingAndGlyphs">КД</text>
<text x="1151.4" y="311.3" font-size="8.72" textLength="11.3" lengthAdjust="spacingAndGlyphs">МЗ</text>
<text x="526.5" y="334.7" font-size="10.17" textLength="18.3" lengthAdjust="spacingAndGlyphs">М 02</text>
<text x="655.5" y="334.7" font-size="10.17" textLength="8.8" lengthAdjust="spacingAndGlyphs">кг</text>
<text x="688.2" y="334.7" font-size="10.17" textLength="19.4" lengthAdjust="spacingAndGlyphs">0,126</text>
<text x="741.8" y="334.7" font-size="10.17" textLength="3.8" lengthAdjust="spacingAndGlyphs">1</text>
<text x="783.3" y="334.7" font-size="10.17" textLength="11.7" lengthAdjust="spacingAndGlyphs">0,4</text>
<text x="824.0" y="334.7" font-size="10.17" textLength="15.7" lengthAdjust="spacingAndGlyphs">0,35</text>
<text x="995.7" y="334.7" font-size="10.17" textLength="41.3" lengthAdjust="spacingAndGlyphs">Ø40x194,5</text>
<text x="1109.0" y="334.7" font-size="10.17" textLength="3.8" lengthAdjust="spacingAndGlyphs">1</text>
<text x="532.6" y="347.0" font-size="8.72" textLength="5.2" lengthAdjust="spacingAndGlyphs">А</text>
<text x="559.3" y="347.0" font-size="8.72" textLength="14.1" lengthAdjust="spacingAndGlyphs">Цех</text>
<text x="589.3" y="347.0" font-size="8.72" textLength="10.7" lengthAdjust="spacingAndGlyphs">Уч.</text>
<text x="617.0" y="347.0" font-size="8.72" textLength="11.0" lengthAdjust="spacingAndGlyphs">РМ</text>
<text x="645.0" y="347.0" font-size="8.72" textLength="19.3" lengthAdjust="spacingAndGlyphs">Опер.</text>
<text x="720.0" y="347.0" font-size="8.72" textLength="109.8" lengthAdjust="spacingAndGlyphs">Код, наименование операции</text>
<text x="1038.8" y="347.0" font-size="8.72" textLength="93.7" lengthAdjust="spacingAndGlyphs">Обозначение документа</text>
<text x="532.6" y="358.4" font-size="8.72" textLength="5.2" lengthAdjust="spacingAndGlyphs">Б</text>
<text x="651.4" y="358.4" font-size="8.72" textLength="127.2" lengthAdjust="spacingAndGlyphs">Код, наименование оборудования</text>
<text x="886.5" y="358.4" font-size="8.72" textLength="10.5" lengthAdjust="spacingAndGlyphs">СМ</text>
<text x="918.8" y="358.4" font-size="8.72" textLength="21.2" lengthAdjust="spacingAndGlyphs">Проф.</text>
<text x="967.3" y="358.4" font-size="8.72" textLength="5.4" lengthAdjust="spacingAndGlyphs">Р</text>
<text x="996.0" y="358.4" font-size="8.72" textLength="10.7" lengthAdjust="spacingAndGlyphs">УТ</text>
<text x="1027.8" y="358.4" font-size="8.72" textLength="11.0" lengthAdjust="spacingAndGlyphs">КР</text>
<text x="1054.2" y="358.4" font-size="8.72" textLength="21.1" lengthAdjust="spacingAndGlyphs">КОИД</text>
<text x="1094.0" y="358.4" font-size="8.72" textLength="10.0" lengthAdjust="spacingAndGlyphs">ЕН</text>
<text x="1130.2" y="358.4" font-size="8.72" textLength="10.2" lengthAdjust="spacingAndGlyphs">ОП</text>
<text x="1160.0" y="358.4" font-size="8.72" textLength="18.6" lengthAdjust="spacingAndGlyphs">Кшт.</text>
<text x="1205.8" y="358.4" font-size="8.72" textLength="13.6" lengthAdjust="spacingAndGlyphs">Тпз.</text>
<text x="1257.6" y="358.4" font-size="8.72" textLength="16.6" lengthAdjust="spacingAndGlyphs">Тшт.</text>
<text x="528.0" y="380.7" font-size="10.90" textLength="14.8" lengthAdjust="spacingAndGlyphs">А03</text>
<text x="528.0" y="403.8" font-size="10.90" textLength="14.4" lengthAdjust="spacingAndGlyphs">Б04</text>
<text x="648.4" y="380.7" font-size="10.90" textLength="14.7" lengthAdjust="spacingAndGlyphs">005</text>
<text x="674.1" y="380.7" font-size="10.90" textLength="104.5" lengthAdjust="spacingAndGlyphs">4287 Абразивно-отрезная</text>
<text x="555.4" y="403.8" font-size="10.90" textLength="141.2" lengthAdjust="spacingAndGlyphs">Абразивно-отрезной станок 8А240</text>
<text x="1049.6" y="403.8" font-size="10.90" textLength="3.8" lengthAdjust="spacingAndGlyphs">1</text>
<text x="1084.8" y="403.8" font-size="10.90" textLength="3.8" lengthAdjust="spacingAndGlyphs">1</text>
<text x="1120.4" y="403.8" font-size="10.90" textLength="3.8" lengthAdjust="spacingAndGlyphs">1</text>
<text x="1239.7" y="403.8" font-size="10.90" textLength="10.7" lengthAdjust="spacingAndGlyphs">0,8</text>
<text x="528.0" y="426.9" font-size="10.90" textLength="14.8" lengthAdjust="spacingAndGlyphs">А05</text>
<text x="528.0" y="450.0" font-size="10.90" textLength="14.4" lengthAdjust="spacingAndGlyphs">Б06</text>
<text x="648.4" y="426.9" font-size="10.90" textLength="14.7" lengthAdjust="spacingAndGlyphs">010</text>
<text x="674.1" y="426.9" font-size="10.90" textLength="56.2" lengthAdjust="spacingAndGlyphs">4110 Токарная</text>
<text x="555.4" y="450.0" font-size="10.90" textLength="143.6" lengthAdjust="spacingAndGlyphs">Токарно-винторезный станок 16К20</text>
<text x="908.4" y="450.0" font-size="10.90" textLength="21.5" lengthAdjust="spacingAndGlyphs">19149</text>
<text x="957.0" y="450.0" font-size="10.90" textLength="4.6" lengthAdjust="spacingAndGlyphs">3</text>
<text x="1021.2" y="450.0" font-size="10.90" textLength="3.8" lengthAdjust="spacingAndGlyphs">1</text>
<text x="1049.6" y="450.0" font-size="10.90" textLength="3.8" lengthAdjust="spacingAndGlyphs">1</text>
<text x="1084.8" y="450.0" font-size="10.90" textLength="3.8" lengthAdjust="spacingAndGlyphs">1</text>
<text x="1120.4" y="450.0" font-size="10.90" textLength="3.8" lengthAdjust="spacingAndGlyphs">1</text>
<text x="1155.6" y="450.0" font-size="10.90" textLength="3.8" lengthAdjust="spacingAndGlyphs">1</text>
<text x="1190.6" y="450.0" font-size="10.90" textLength="13.8" lengthAdjust="spacingAndGlyphs">0,14</text>
<text x="1239.7" y="450.0" font-size="10.90" textLength="14.4" lengthAdjust="spacingAndGlyphs">0,15</text>
<text x="528.0" y="473.1" font-size="10.90" textLength="14.8" lengthAdjust="spacingAndGlyphs">А07</text>
<text x="528.0" y="496.2" font-size="10.90" textLength="14.4" lengthAdjust="spacingAndGlyphs">Б08</text>
<text x="648.4" y="473.1" font-size="10.90" textLength="14.7" lengthAdjust="spacingAndGlyphs">015</text>
<text x="674.1" y="473.1" font-size="10.90" textLength="56.2" lengthAdjust="spacingAndGlyphs">4110 Токарная</text>
<text x="555.4" y="496.2" font-size="10.90" textLength="152.8" lengthAdjust="spacingAndGlyphs">Токарно-винторезный станок 16К20Т1</text>
<text x="908.4" y="496.2" font-size="10.90" textLength="21.5" lengthAdjust="spacingAndGlyphs">19149</text>
<text x="957.0" y="496.2" font-size="10.90" textLength="5.1" lengthAdjust="spacingAndGlyphs">4</text>
<text x="1021.2" y="496.2" font-size="10.90" textLength="3.8" lengthAdjust="spacingAndGlyphs">1</text>
<text x="1049.6" y="496.2" font-size="10.90" textLength="3.8" lengthAdjust="spacingAndGlyphs">1</text>
<text x="1084.8" y="496.2" font-size="10.90" textLength="3.8" lengthAdjust="spacingAndGlyphs">1</text>
<text x="1120.4" y="496.2" font-size="10.90" textLength="3.8" lengthAdjust="spacingAndGlyphs">1</text>
<text x="1155.6" y="496.2" font-size="10.90" textLength="3.8" lengthAdjust="spacingAndGlyphs">1</text>
<text x="1239.7" y="496.2" font-size="10.90" textLength="10.7" lengthAdjust="spacingAndGlyphs">6,5</text>
<text x="528.0" y="519.3" font-size="10.90" textLength="14.8" lengthAdjust="spacingAndGlyphs">А09</text>
<text x="528.0" y="542.4" font-size="10.90" textLength="14.4" lengthAdjust="spacingAndGlyphs">Б10</text>
<text x="648.4" y="519.3" font-size="10.90" textLength="14.7" lengthAdjust="spacingAndGlyphs">020</text>
<text x="674.1" y="519.3" font-size="10.90" textLength="85.1" lengthAdjust="spacingAndGlyphs">4233 Токарная с ЧПУ</text>
<text x="555.4" y="542.4" font-size="10.90" textLength="154.6" lengthAdjust="spacingAndGlyphs">Токарно-винторезный станок 16К20Ф3</text>
<text x="908.4" y="542.4" font-size="10.90" textLength="21.5" lengthAdjust="spacingAndGlyphs">19149</text>
<text x="957.0" y="542.4" font-size="10.90" textLength="5.1" lengthAdjust="spacingAndGlyphs">4</text>
<text x="1021.2" y="542.4" font-size="10.90" textLength="3.8" lengthAdjust="spacingAndGlyphs">1</text>
<text x="1049.6" y="542.4" font-size="10.90" textLength="3.8" lengthAdjust="spacingAndGlyphs">1</text>
<text x="1084.8" y="542.4" font-size="10.90" textLength="3.8" lengthAdjust="spacingAndGlyphs">1</text>
<text x="1120.4" y="542.4" font-size="10.90" textLength="3.8" lengthAdjust="spacingAndGlyphs">1</text>
<text x="1155.6" y="542.4" font-size="10.90" textLength="3.8" lengthAdjust="spacingAndGlyphs">1</text>
<text x="528.0" y="565.5" font-size="10.90" textLength="14.8" lengthAdjust="spacingAndGlyphs">А11</text>
<text x="528.0" y="588.6" font-size="10.90" textLength="14.4" lengthAdjust="spacingAndGlyphs">Б12</text>
<text x="648.4" y="565.5" font-size="10.90" textLength="14.7" lengthAdjust="spacingAndGlyphs">025</text>
<text x="674.1" y="565.5" font-size="10.90" textLength="117.4" lengthAdjust="spacingAndGlyphs">4261 Вертикально-фрезерная</text>
<text x="555.4" y="588.6" font-size="10.90" textLength="195.8" lengthAdjust="spacingAndGlyphs">Консольный вертикально-фрезерный станок 6Р12</text>
<text x="908.4" y="588.6" font-size="10.90" textLength="22.9" lengthAdjust="spacingAndGlyphs">19479</text>
<text x="957.0" y="588.6" font-size="10.90" textLength="4.6" lengthAdjust="spacingAndGlyphs">3</text>
<text x="1021.2" y="588.6" font-size="10.90" textLength="3.8" lengthAdjust="spacingAndGlyphs">1</text>
<text x="1049.6" y="588.6" font-size="10.90" textLength="3.8" lengthAdjust="spacingAndGlyphs">1</text>
<text x="1084.8" y="588.6" font-size="10.90" textLength="3.8" lengthAdjust="spacingAndGlyphs">1</text>
<text x="1120.4" y="588.6" font-size="10.90" textLength="3.8" lengthAdjust="spacingAndGlyphs">1</text>
<text x="1155.6" y="588.6" font-size="10.90" textLength="3.8" lengthAdjust="spacingAndGlyphs">1</text>
<text x="1239.7" y="588.6" font-size="10.90" textLength="11.2" lengthAdjust="spacingAndGlyphs">3,2</text>
<text x="528.0" y="611.7" font-size="10.90" textLength="14.8" lengthAdjust="spacingAndGlyphs">А13</text>
<text x="528.0" y="634.8" font-size="10.90" textLength="14.4" lengthAdjust="spacingAndGlyphs">Б14</text>
<text x="648.4" y="611.7" font-size="10.90" textLength="14.7" lengthAdjust="spacingAndGlyphs">030</text>
<text x="674.1" y="611.7" font-size="10.90" textLength="117.4" lengthAdjust="spacingAndGlyphs">4261 Вертикально-фрезерная</text>
<text x="555.4" y="634.8" font-size="10.90" textLength="195.8" lengthAdjust="spacingAndGlyphs">Консольный вертикально-фрезерный станок 6Р12</text>
<text x="908.4" y="634.8" font-size="10.90" textLength="22.9" lengthAdjust="spacingAndGlyphs">19479</text>
<text x="957.0" y="634.8" font-size="10.90" textLength="4.6" lengthAdjust="spacingAndGlyphs">3</text>
<text x="1021.2" y="634.8" font-size="10.90" textLength="3.8" lengthAdjust="spacingAndGlyphs">1</text>
<text x="1049.6" y="634.8" font-size="10.90" textLength="3.8" lengthAdjust="spacingAndGlyphs">1</text>
<text x="1084.8" y="634.8" font-size="10.90" textLength="3.8" lengthAdjust="spacingAndGlyphs">1</text>
<text x="1120.4" y="634.8" font-size="10.90" textLength="3.8" lengthAdjust="spacingAndGlyphs">1</text>
<text x="1155.6" y="634.8" font-size="10.90" textLength="3.8" lengthAdjust="spacingAndGlyphs">1</text>
<text x="1239.7" y="634.8" font-size="10.90" textLength="11.2" lengthAdjust="spacingAndGlyphs">3,2</text>
<text x="528.0" y="657.9" font-size="10.90" textLength="14.8" lengthAdjust="spacingAndGlyphs">А15</text>
<text x="528.0" y="681.0" font-size="10.90" textLength="14.4" lengthAdjust="spacingAndGlyphs">Б16</text>
<text x="648.4" y="657.9" font-size="10.90" textLength="14.7" lengthAdjust="spacingAndGlyphs">035</text>
<text x="674.1" y="657.9" font-size="10.90" textLength="124.8" lengthAdjust="spacingAndGlyphs">4214 Вертикально-сверлильная</text>
<text x="555.4" y="681.0" font-size="10.90" textLength="160.5" lengthAdjust="spacingAndGlyphs">Вертикально-сверлильный станок 2Н125</text>
<text x="908.4" y="681.0" font-size="10.90" textLength="21.2" lengthAdjust="spacingAndGlyphs">18355</text>
<text x="957.0" y="681.0" font-size="10.90" textLength="4.6" lengthAdjust="spacingAndGlyphs">3</text>
<text x="1021.2" y="681.0" font-size="10.90" textLength="3.8" lengthAdjust="spacingAndGlyphs">1</text>
<text x="1049.6" y="681.0" font-size="10.90" textLength="3.8" lengthAdjust="spacingAndGlyphs">1</text>
<text x="1084.8" y="681.0" font-size="10.90" textLength="3.8" lengthAdjust="spacingAndGlyphs">1</text>
<text x="1120.4" y="681.0" font-size="10.90" textLength="3.8" lengthAdjust="spacingAndGlyphs">1</text>
<text x="1155.6" y="681.0" font-size="10.90" textLength="3.8" lengthAdjust="spacingAndGlyphs">1</text>
<text x="1239.7" y="681.0" font-size="10.90" textLength="4.6" lengthAdjust="spacingAndGlyphs">3</text>
<text x="544.0" y="698.6" font-size="10.17" textLength="11.4" lengthAdjust="spacingAndGlyphs">МК</text>
<text x="583.6" y="698.6" font-size="10.17" textLength="75.4" lengthAdjust="spacingAndGlyphs">Маршрутная карта</text>
<text x="1270.7" y="699.4" font-size="11.63" textLength="5.2" lengthAdjust="spacingAndGlyphs">2</text></svg>
</div>
</body></html>
